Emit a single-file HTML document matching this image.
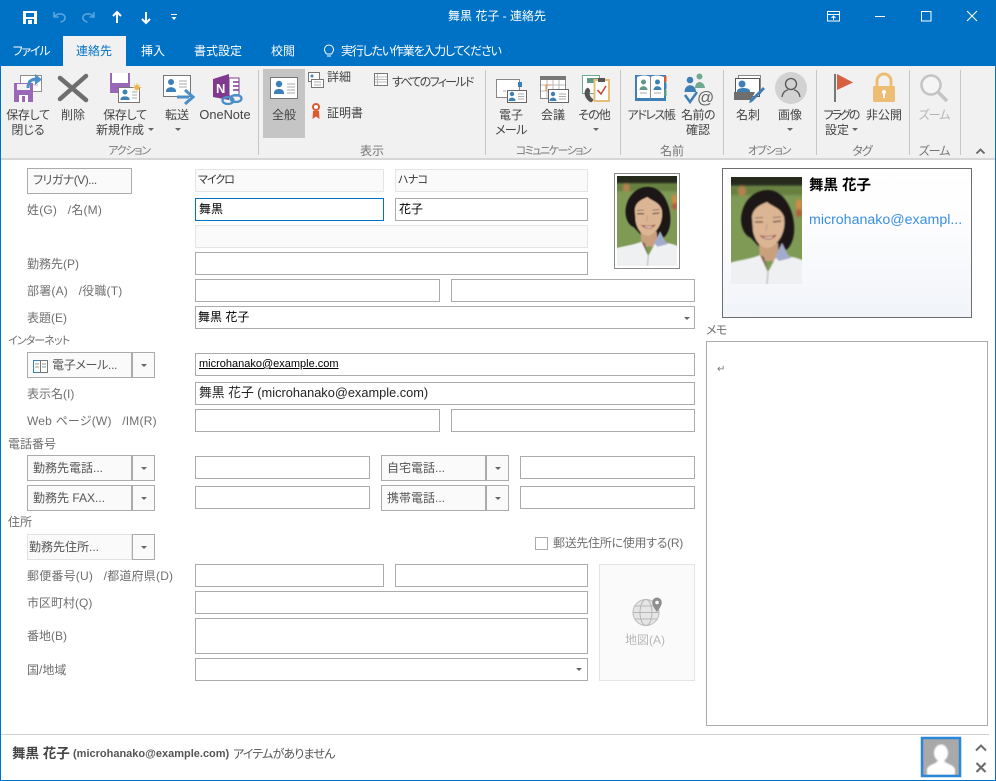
<!DOCTYPE html>
<html lang="ja"><head><meta charset="utf-8"><title>舞黒 花子 - 連絡先</title>
<style>
html,body{margin:0;padding:0;width:996px;height:781px;overflow:hidden;background:#fff}
body{position:relative;font-family:"Liberation Sans","Noto Sans CJK JP",sans-serif;font-size:12px;font-feature-settings:"palt";color:#444}
div,span.t{position:absolute;box-sizing:border-box}
.t{white-space:nowrap;line-height:16px;height:16px}
.c{transform:translateX(-50%)}
.w{color:#fff}
.r{color:#444}
.g{color:#777}
.l{color:#6f6f6f}
.k{color:#000}
.f{border:1px solid #ababab;background:#fff}
.d{border:1px solid #e4e4e4;background:#fafafa}
.b{border:1px solid #ababab;background:#fafafa;height:26px;width:105px;left:27px}
.ar{width:23px;height:26px;border:1px solid #ababab;background:#fafafa}
.a{width:0;height:0;border-left:3px solid transparent;border-right:3px solid transparent;border-top:3px solid #666}
.s{width:1px;background:#c6c6c6;top:70px;height:85px}
svg{position:absolute;left:0;top:0}
</style></head><body>
<div style="left:0;top:0;width:996px;height:781px;border:1px solid #0072c6;border-top:0"></div>
<div style="left:0;top:0;width:996px;height:66px;background:#0072c6"></div>
<div style="left:1px;top:66px;width:994px;height:92px;background:#f1f1f1"></div>
<div style="left:1px;top:158px;width:994px;height:2px;background:#d6d6d6"></div>
<div style="left:63px;top:36px;width:63px;height:30px;background:#f1f1f1"></div>
<div style="left:263px;top:69px;width:42px;height:69px;background:#c5c5c5"></div>

<span class="t w c" style="left:497px;top:8px">舞黒 花子 - 連絡先</span>
<span class="t w c" style="left:31px;top:43px;letter-spacing:-1.2px">ファイル</span>
<span class="t c" style="left:94px;top:43px;color:#0072c6">連絡先</span>
<span class="t w c" style="left:153px;top:43px">挿入</span>
<span class="t w c" style="left:218px;top:43px">書式設定</span>
<span class="t w c" style="left:283px;top:43px">校閲</span>
<span class="t w" style="left:341px;top:43px;letter-spacing:-1.2px">実行したい作業を入力してください</span>

<span class="t r c" style="left:28px;top:107px;letter-spacing:-.3px">保存して</span><span class="t r c" style="left:28px;top:122px">閉じる</span>
<span class="t r c" style="left:73px;top:107px">削除</span>
<span class="t r c" style="left:125px;top:107px;letter-spacing:-.3px">保存して</span><span class="t r c" style="left:120px;top:122px">新規作成</span><div class="a" style="left:148px;top:128px"></div>
<span class="t r c" style="left:177px;top:107px">転送</span><div class="a" style="left:175px;top:128px"></div>
<span class="t r c" style="left:225px;top:107px;font-size:12.8px">OneNote</span>
<span class="t r c" style="left:284px;top:107px">全般</span>
<span class="t r" style="left:327px;top:69px">詳細</span>
<span class="t r" style="left:392px;top:74px;letter-spacing:-1.7px">すべてのフィールド</span>
<span class="t r" style="left:327px;top:105px">証明書</span>
<span class="t r c" style="left:511px;top:107px">電子</span><span class="t r c" style="left:511px;top:122px;letter-spacing:-.6px">メール</span>
<span class="t r c" style="left:553px;top:107px">会議</span>
<span class="t r c" style="left:594px;top:107px;letter-spacing:-1px">その他</span><div class="a" style="left:593px;top:128px"></div>
<span class="t r c" style="left:651px;top:107px;letter-spacing:-1.4px">アドレス帳</span>
<span class="t r c" style="left:698px;top:107px;letter-spacing:-.5px">名前の</span><span class="t r c" style="left:698px;top:122px">確認</span>
<span class="t r c" style="left:748px;top:107px">名刺</span>
<span class="t r c" style="left:790px;top:107px">画像</span><div class="a" style="left:787px;top:128px"></div>
<span class="t r c" style="left:841px;top:107px;letter-spacing:-2px">フラグの</span><span class="t r c" style="left:837px;top:122px">設定</span><div class="a" style="left:852px;top:128px"></div>
<span class="t r c" style="left:884px;top:107px">非公開</span>
<span class="t c" style="left:934px;top:107px;color:#b5b5b5;letter-spacing:-1px">ズーム</span>
<span class="t g c" style="left:129px;top:143px;font-size:11px;letter-spacing:-1.2px">アクション</span>
<span class="t g c" style="left:372px;top:143px">表示</span>
<span class="t g c" style="left:553px;top:143px;font-size:11px;letter-spacing:-1.5px">コミュニケーション</span>
<span class="t g c" style="left:672px;top:143px">名前</span>
<span class="t g c" style="left:769px;top:143px;font-size:11px;letter-spacing:-1.2px">オプション</span>
<span class="t g c" style="left:862px;top:143px;letter-spacing:-1px">タグ</span>
<span class="t g c" style="left:934px;top:143px;letter-spacing:-1px">ズーム</span>
<div class="s" style="left:258px"></div><div class="s" style="left:485px"></div><div class="s" style="left:620px"></div><div class="s" style="left:723px"></div><div class="s" style="left:816px"></div><div class="s" style="left:909px"></div><div class="s" style="left:960px"></div>

<!-- form -->
<div class="b" style="top:168px"></div><span class="t" style="left:33px;top:172px;color:#555;letter-spacing:-.5px">フリガナ(V)...</span>
<div class="d" style="left:195px;top:169px;width:189px;height:23px"></div><span class="t" style="left:198px;top:172px;color:#333;font-size:11px;letter-spacing:-1px">マイクロ</span>
<div class="d" style="left:395px;top:169px;width:193px;height:23px"></div><span class="t" style="left:398px;top:172px;color:#333;font-size:11px;letter-spacing:-.7px">ハナコ</span>
<span class="t l" style="left:27px;top:202px;letter-spacing:.2px">姓(G) &nbsp;&nbsp;/名(M)</span>
<div class="f" style="left:195px;top:198px;width:189px;height:23px;border-color:#0072c6"></div><span class="t k" style="left:199px;top:201px">舞黒</span>
<div class="f" style="left:395px;top:198px;width:193px;height:23px"></div><span class="t k" style="left:399px;top:201px">花子</span>
<div class="d" style="left:195px;top:225px;width:393px;height:23px"></div>
<span class="t l" style="left:27px;top:256px">勤務先(P)</span>
<div class="f" style="left:195px;top:252px;width:393px;height:23px"></div>
<span class="t l" style="left:27px;top:283px;letter-spacing:.2px">部署(A) &nbsp;&nbsp;/役職(T)</span>
<div class="f" style="left:195px;top:279px;width:245px;height:23px"></div>
<div class="f" style="left:451px;top:279px;width:244px;height:23px"></div>
<span class="t l" style="left:27px;top:310px">表題(E)</span>
<div class="f" style="left:195px;top:306px;width:500px;height:23px"></div><span class="t k" style="left:198px;top:309px">舞黒 花子</span><div class="a" style="left:684px;top:317px"></div>
<span class="t l" style="left:8px;top:333px;font-size:11px;letter-spacing:-.9px">インターネット</span>
<div class="b" style="top:352px"></div><div class="ar" style="left:132px;top:352px"></div><div class="a" style="left:141px;top:364px"></div>
<span class="t" style="left:52px;top:357px;color:#555;letter-spacing:-.3px">電子メール...</span>
<div class="f" style="left:195px;top:353px;width:500px;height:23px"></div><span class="t k" style="left:199px;top:356px;font-size:11px;text-decoration:underline">microhanako@example.com</span>
<span class="t l" style="left:27px;top:386px">表示名(I)</span>
<div class="f" style="left:195px;top:382px;width:500px;height:23px"></div><span class="t" style="left:199px;top:385px;color:#222;font-size:12.8px">舞黒 花子 (microhanako@example.com)</span>
<span class="t l" style="left:27px;top:413px;letter-spacing:.2px">Web ページ(W) &nbsp;&nbsp;/IM(R)</span>
<div class="f" style="left:195px;top:409px;width:245px;height:23px"></div>
<div class="f" style="left:451px;top:409px;width:244px;height:23px"></div>
<span class="t l" style="left:8px;top:436px">電話番号</span>
<div class="b" style="top:455px"></div><div class="ar" style="left:132px;top:455px"></div><div class="a" style="left:141px;top:467px"></div><span class="t" style="left:33px;top:460px;color:#555">勤務先電話...</span>
<div class="f" style="left:195px;top:456px;width:175px;height:23px"></div>
<div class="b" style="left:381px;top:455px"></div><div class="ar" style="left:486px;top:455px"></div><div class="a" style="left:495px;top:467px"></div><span class="t" style="left:387px;top:460px;color:#555">自宅電話...</span>
<div class="f" style="left:520px;top:456px;width:175px;height:23px"></div>
<div class="b" style="top:485px"></div><div class="ar" style="left:132px;top:485px"></div><div class="a" style="left:141px;top:497px"></div><span class="t" style="left:33px;top:490px;color:#555">勤務先 FAX...</span>
<div class="f" style="left:195px;top:486px;width:175px;height:23px"></div>
<div class="b" style="left:381px;top:485px"></div><div class="ar" style="left:486px;top:485px"></div><div class="a" style="left:495px;top:497px"></div><span class="t" style="left:387px;top:490px;color:#555">携帯電話...</span>
<div class="f" style="left:520px;top:486px;width:175px;height:23px"></div>
<span class="t l" style="left:8px;top:514px">住所</span>
<div class="b" style="top:534px;border-color:#e2e2e2"></div><div class="ar" style="left:132px;top:534px"></div><div class="a" style="left:141px;top:546px"></div><span class="t" style="left:29px;top:539px;color:#555">勤務先住所...</span>
<div class="f" style="left:535px;top:537px;width:13px;height:13px"></div><span class="t l" style="left:553px;top:535px;letter-spacing:-.3px">郵送先住所に使用する(R)</span>
<span class="t l" style="left:27px;top:568px;letter-spacing:.2px">郵便番号(U) &nbsp;&nbsp;/都道府県(D)</span>
<div class="f" style="left:195px;top:564px;width:189px;height:23px"></div>
<div class="f" style="left:395px;top:564px;width:193px;height:23px"></div>
<span class="t l" style="left:27px;top:595px">市区町村(Q)</span>
<div class="f" style="left:195px;top:591px;width:393px;height:23px"></div>
<span class="t l" style="left:27px;top:628px">番地(B)</span>
<div class="f" style="left:195px;top:618px;width:393px;height:36px"></div>
<span class="t l" style="left:27px;top:662px">国/地域</span>
<div class="f" style="left:195px;top:658px;width:393px;height:23px"></div><div class="a" style="left:576px;top:668px"></div>
<div class="d" style="left:599px;top:564px;width:96px;height:117px"></div>
<span class="t c" style="left:645px;top:632px;color:#b8b8b8">地図(A)</span>

<!-- contact card -->
<div style="left:614px;top:173px;width:66px;height:96px;border:1px solid #8a8a8a;background:#fff"></div>
<div style="left:722px;top:168px;width:250px;height:150px;border:1px solid #6d6d6d;background:linear-gradient(#fff 0%,#fdfdfe 35%,#f1f4f9 100%)"></div>
<span class="t k" style="left:809px;top:177px;font-size:14.5px;font-weight:bold;height:18px;line-height:18px">舞黒 花子</span>
<span class="t" style="left:809px;top:212px;font-size:14.2px;color:#3a8fe4">microhanako@exampl...</span>
<span class="t l" style="left:706px;top:322px;letter-spacing:-.5px">メモ</span>
<div class="f" style="left:706px;top:341px;width:282px;height:385px"></div>
<span class="t" style="left:717px;top:362px;color:#777;font-size:10px">↵</span>

<!-- footer -->
<div style="left:1px;top:734px;width:988px;height:1px;background:#d2d2d2"></div>
<span class="t" style="left:12px;top:746px;font-weight:bold;font-size:13.5px;color:#444">舞黒 花子</span>
<span class="t" style="left:73px;top:746px;font-weight:bold;font-size:11px;color:#555">(microhanako@example.com)</span>
<span class="t" style="left:233px;top:746px;color:#555;letter-spacing:-.8px">アイテムがありません</span>

<svg width="996" height="781" viewBox="0 0 996 781" xmlns="http://www.w3.org/2000/svg">
<defs>
<filter id="bl" x="-5%" y="-5%" width="110%" height="110%"><feGaussianBlur stdDeviation="0.7"/></filter>
<filter id="bl2" x="-20%" y="-20%" width="140%" height="140%"><feGaussianBlur stdDeviation="1.3"/></filter>
<clipPath id="pc"><rect width="71" height="107"/></clipPath>
<symbol id="photo" viewBox="0 0 71 107" preserveAspectRatio="none">
<g clip-path="url(#pc)">
<rect width="71" height="107" fill="#7f9a55"/>
<g filter="url(#bl2)"><rect x="-5" y="-5" width="81" height="14" fill="#262a1c"/><rect x="-5" y="10" width="81" height="8" fill="#66803f"/>
<ellipse cx="11" cy="14" rx="4" ry="5" fill="#b5814f"/><ellipse cx="68" cy="28" rx="3" ry="6" fill="#d98845"/><ellipse cx="68" cy="36" rx="3" ry="4" fill="#b85a3c"/></g>
<g filter="url(#bl)">
<path d="M37 13C22 13 11 25 10 42C10 50 13 58 20 61L30 72L52 74C57 74 62 66 63 56C65 36 54 13 37 13Z" fill="#1b1613"/>
<path d="M28 66L29 84L48 84L47 66Z" fill="#c9a07e"/>
<path d="M-2 86C8 83 20 82 29 78L37 95L45 80C54 78 66 80 73 84L73 109L-2 109Z" fill="#eef0f2"/>
<path d="M44 80L51 66L56 76L60 81L48 84Z" fill="#a3abcc"/>
<path d="M37 95L36 107" stroke="#aaa4aa" stroke-width="1"/>
<path d="M29 78L37 95L33 80Z" fill="#7e6048"/>
<path d="M21 40C22 31 29 28 36 25C42 30 50 31 53 40C55 52 50 66 38 71C30 72 24 64 22 54Z" fill="#dcb594"/>
<path d="M24 45L32 45M42 45L50 44" stroke="#5a4334" stroke-width="1.3"/>
<path d="M24 41L32 40.500M42 40.500L50 40" stroke="#6a5040" stroke-width=".8"/>
<path d="M30 59C34 63 41 63 45 58C41 60 34 60 30 59Z" fill="#fff" stroke="#a35a4a" stroke-width="1.200"/>
<path d="M36 47L35 54" stroke="#c49a7c" stroke-width="1"/>
</g></g>
</symbol>
</defs>
<use href="#photo" x="617" y="176" width="60" height="90"/>
<use href="#photo" x="731" y="177" width="71" height="107"/>

<!-- QAT -->
<path d="M23 11H37V24H23Z" fill="#fff"/><rect x="26" y="13" width="8" height="4" fill="#0072c6"/><rect x="26" y="19" width="8" height="5" fill="#0072c6"/><rect x="28" y="20" width="4" height="4" fill="#fff"/>
<g fill="none" stroke="#fff" stroke-width="1.600">
<g opacity=".35"><path d="M54 12V17H58.500M54.500 16.500C57 13 64 13 65 17C65.500 19.500 63.500 21.500 60.500 22"/><path d="M94 12V17H89.500M93.500 16.500C91 13 84 13 83 17C82.500 19.500 84.500 21.500 87.500 22"/></g>
<path d="M117 23V12M113 16L117 12L121 16" stroke-width="2"/>
<path d="M146 12V23M142 19L146 23L150 19" stroke-width="2"/>
<path d="M171 14.500H177" stroke-width="1"/>
</g>
<path d="M171.500 17H176.500L174 20Z" fill="#fff"/>
<!-- window controls -->
<g fill="none" stroke="#fff" stroke-width="1">
<rect x="827.500" y="11.500" width="12" height="9.500"/><path d="M827 14.500H840M833.500 20V16M831.500 18L833.500 16L835.500 18"/>
<path d="M875 16.500H885"/>
<rect x="921.500" y="11.500" width="9.500" height="9.500"/>
<path d="M967 11L977 21M977 11L967 21"/>
</g>
<!-- bulb -->
<g fill="none" stroke="#fff" stroke-width="1"><path d="M326.500 54C325 52 324.500 51 324.500 49.500A4.500 4.500 0 0 1 333.500 49.500C333.500 51 333 52 331.500 54Z"/><path d="M327 56H331"/></g>
<!-- save&close -->
<rect x="20.500" y="75.500" width="21" height="16" fill="#fff" stroke="#8e8e8e"/><path d="M24 85H38M28 81H38" stroke="#bbb"/>
<path d="M14 83H33V102H14Z" fill="#9a68b8"/><rect x="17" y="84" width="13" height="6" fill="#f1f1f1"/><rect x="19" y="95" width="9" height="7" fill="#fff"/><rect x="22" y="96" width="3" height="6" fill="#9a68b8"/>
<path d="M28 88C28 81 32 79 37 79" fill="none" stroke="#4a8fc7" stroke-width="3"/><path d="M35 74L42 79.500L35 85Z" fill="#4a8fc7"/>
<!-- delete -->
<path d="M60 78L86 100M86 76L60 99" stroke="#6e6e6e" stroke-width="4.500" stroke-linecap="round"/>
<!-- save new -->
<path d="M110 73H130V93H110Z" fill="#9a68b8"/><rect x="112" y="73" width="16" height="10" fill="#fff"/>
<rect x="118.500" y="87.500" width="21" height="15" fill="#fff" stroke="#777"/><circle cx="125" cy="92" r="2.500" fill="#3f7fb8"/><path d="M120.500 99C120.500 95.500 129.500 95.500 129.500 99V100H120.500Z" fill="#3f7fb8"/><path d="M132 92H137M132 95H137M132 98H137" stroke="#aaa"/>
<circle cx="137" cy="87.500" r="2.500" fill="#eab54f"/><path d="M137 83V92M132.500 87.500H141.500M134 84.500L140 90.500M140 84.500L134 90.500" stroke="#eab54f" stroke-width=".7"/>
<!-- forward -->
<rect x="163.500" y="75.500" width="27" height="21" fill="#fff" stroke="#777"/><circle cx="171" cy="82" r="3" fill="#3f7fb8"/><path d="M166 91C166 86 176 86 176 91V92H166Z" fill="#3f7fb8"/><path d="M179 81H187M179 84H187M179 87H187" stroke="#aaa"/>
<path d="M177 97H189" stroke="#4a8fc7" stroke-width="3"/><path d="M185 90L193 97L185 104" fill="none" stroke="#4a8fc7" stroke-width="3"/>
<!-- onenote -->
<path d="M213 79L229 74V100L213 97Z" fill="#7f3a8e"/>
<rect x="229" y="78" width="10" height="18" fill="#fff" stroke="#7f3a8e"/><path d="M233 82H239M233 86H239M233 90H239" stroke="#7f3a8e" stroke-width="1.500"/>
<text x="216" y="93" font-family="Liberation Sans" font-size="13" font-weight="bold" fill="#fff" style="font-feature-settings:normal">N</text>
<g fill="none" stroke="#4a8fc7" stroke-width="2.300"><ellipse cx="228" cy="100.500" rx="5.500" ry="3.500"/><ellipse cx="236" cy="98.500" rx="5.500" ry="3.500"/></g>
<!-- general card -->
<rect x="270.500" y="77.500" width="27" height="21" fill="#fff" stroke="#777"/><circle cx="279" cy="84" r="3.200" fill="#3f7fb8"/><path d="M274 93C274 87.500 284 87.500 284 93V94H274Z" fill="#3f7fb8"/><path d="M287 84H295M287 87H295M287 90H295M287 93H295" stroke="#aaa"/>
<!-- details small -->
<rect x="308.500" y="72.500" width="11" height="9" fill="#fff" stroke="#777"/><circle cx="312" cy="76" r="1.500" fill="#3f7fb8"/><rect x="311.500" y="79.500" width="12" height="8" fill="#fff" stroke="#777"/><path d="M314 82H321M314 85H321" stroke="#aaa"/>
<!-- all fields -->
<rect x="374.500" y="73.500" width="13" height="12" fill="#fff" stroke="#777"/><path d="M377.500 74V85M375 77H387M375 79.500H387M375 82H387" stroke="#bbb"/>
<!-- cert -->
<circle cx="316" cy="107" r="3" fill="#fff" stroke="#dd5a30" stroke-width="2"/><path d="M313 111L312.500 119L316 116.500L319.500 119L319 111Z" fill="#dd5a30"/>
<!-- email -->
<rect x="496.500" y="79.500" width="23" height="18" fill="#fff" stroke="#888"/><rect x="518" y="82" width="4" height="5" fill="#3f7fb8"/><path d="M503 91H506" stroke="#aaa"/>
<rect x="507.500" y="90.500" width="19" height="12" fill="#fff" stroke="#666"/><circle cx="512" cy="94" r="2.200" fill="#3f7fb8"/><path d="M508.500 101C508.500 96.500 515.500 96.500 515.500 101Z" fill="#3f7fb8"/><path d="M518 94H524M518 96.500H524M518 99H524" stroke="#aaa"/>
<!-- meeting -->
<rect x="540.500" y="76.500" width="25" height="22" fill="#fff" stroke="#888"/><rect x="540" y="76" width="26" height="4" fill="#777"/><path d="M547 80V98M553 80V90M559 80V90M541 85H565M541 91H548" stroke="#bbb"/><path d="M546 91V85H551" fill="none" stroke="#e28a3a"/>
<rect x="548.500" y="89.500" width="20" height="13" fill="#fff" stroke="#666"/><circle cx="553" cy="94" r="2.200" fill="#3f7fb8"/><path d="M549.500 101C549.500 96.500 556.500 96.500 556.500 101Z" fill="#3f7fb8"/><path d="M559 94H566M559 96.500H566M559 99H566" stroke="#aaa"/>
<!-- more -->
<rect x="582.500" y="75.500" width="17" height="18" fill="#fff" stroke="#6fa98f"/><rect x="587" y="78" width="11" height="5" fill="#5f9a84"/>
<path d="M587 88C583 91 584 98 590 102C592 103 594 100 593 99C590 97 589 94 590 92C591 90 588 87 587 88Z" fill="#555"/>
<rect x="594.500" y="80" width="14.500" height="21" fill="#fff" stroke="#e9bc78" stroke-width="2"/><rect x="598" y="78" width="7" height="4" fill="#555"/><path d="M597.500 90L601 94L606 86" fill="none" stroke="#c8412f" stroke-width="1.500"/>
<!-- address book -->
<rect x="635" y="75" width="31" height="26" fill="#3f7fb8"/><path d="M637 77C642 75 647 75 650.500 77C654 75 659 75 664 77V98H637Z" fill="#fff"/><path d="M650.500 77V99" stroke="#888"/>
<circle cx="643.500" cy="82" r="2.500" fill="#5f9a84"/><path d="M639.500 90C639.500 85 647.500 85 647.500 90Z" fill="#5f9a84"/><circle cx="657.500" cy="82" r="2.500" fill="#3f7fb8"/><path d="M653.500 90C653.500 85 661.500 85 661.500 90Z" fill="#3f7fb8"/>
<path d="M640 93H647M654 93H661" stroke="#aaa"/><rect x="664" y="76" width="2.500" height="6" fill="#d65a3a"/><rect x="664" y="83" width="2.500" height="6" fill="#3f7fb8"/><rect x="664" y="90" width="2.500" height="6" fill="#5f9a84"/>
<!-- check names -->
<circle cx="699.500" cy="76.500" r="3" fill="#6fa98f"/><path d="M695 88C695 80 704 80 705 88Z" fill="#6fa98f"/><circle cx="690" cy="80" r="3.300" fill="#3f7fb8"/><path d="M684.500 92C684.500 83 696 83 696 92Z" fill="#3f7fb8"/>
<path d="M685 95L690 102L697 92" fill="none" stroke="#3f7fb8" stroke-width="2.500"/>
<text x="697" y="103" font-family="Liberation Sans" font-size="17" fill="#666">@</text>
<!-- biz card -->
<rect x="738.500" y="75.500" width="22" height="18" fill="#fff" stroke="#888"/><rect x="735.500" y="78.500" width="24" height="18" fill="#fff" stroke="#555"/><circle cx="742" cy="84" r="3.500" fill="#3f7fb8"/><path d="M737 91C737 87 750 87 750 91V92H737Z" fill="#3f7fb8"/>
<path d="M734 92H755L751 100H734Z" fill="#6e6e6e"/>
<path d="M750 100L763 87L765 89L752 102L749 103Z" fill="#3f7fb8"/>
<!-- image -->
<circle cx="791" cy="88" r="16" fill="#d2d2d2"/><g fill="none" stroke="#555" stroke-width="1.300"><circle cx="791" cy="84" r="5.500"/><path d="M782 97C783 91 787 90 788 90M800 97C799 91 795 90 794 90"/></g>
<!-- flag -->
<path d="M835 74V102" stroke="#777" stroke-width="2"/><path d="M837 74L853 82.500L837 90Z" fill="#d95f43"/>
<!-- lock -->
<path d="M877 86V81A7 7 0 0 1 891 81V86" fill="none" stroke="#ecbd72" stroke-width="3"/><rect x="873" y="86" width="22" height="16" rx="1.500" fill="#ecbd72"/><circle cx="884" cy="92" r="2" fill="#fff"/><rect x="883" y="92" width="2" height="6" fill="#fff"/>
<!-- zoom -->
<circle cx="931" cy="85" r="9.500" fill="#f5f5f5" stroke="#c4c4c4" stroke-width="2.500"/><path d="M938 92L947 101" stroke="#c4c4c4" stroke-width="3.500"/>
<!-- collapse -->
<path d="M976.500 153.500L980.500 149.500L984.500 153.500" fill="none" stroke="#666" stroke-width="1.800"/>
<!-- email btn book -->
<rect x="33.500" y="360.500" width="7" height="12" fill="#fff" stroke="#3f7fb8"/><rect x="40.500" y="360.500" width="7" height="12" fill="#fff" stroke="#777"/><path d="M35 364H39M35 367H39M42 364H46M42 367H46" stroke="#999"/>
<!-- globe -->
<g fill="none" stroke="#b5b5b5"><circle cx="646" cy="612.500" r="13" fill="#e6e6e6" stroke="#bbb"/><ellipse cx="646" cy="612.500" rx="6" ry="13"/><path d="M633 612.500H659M635 606H657M635 619H657"/></g>
<path d="M657 597.500A4.800 4.800 0 0 1 661.800 602.500C661.800 606 657 612 657 612C657 612 652.200 606 652.200 602.500A4.800 4.800 0 0 1 657 597.500Z" fill="#8f8f8f"/><circle cx="657" cy="602.500" r="1.800" fill="#fafafa"/>
<!-- footer avatar -->
<rect x="922" y="738" width="38" height="38" fill="#a9a9a9"/>
<g filter="url(#bl)"><ellipse cx="941" cy="753" rx="7" ry="8.500" fill="#fff"/><path d="M927 775V769C929 764 937 764 938 760H944C945 764 953 764 955 769V775Z" fill="#fff"/></g>
<rect x="922" y="738" width="38" height="38" fill="none" stroke="#2b88d8" stroke-width="2.500"/>
<path d="M976 750.500L981 745.500L986 750.500" fill="none" stroke="#6d6d6d" stroke-width="2"/>
<path d="M976.500 763L985.500 772M985.500 763L976.500 772" stroke="#6d6d6d" stroke-width="2.200"/>
</svg>
</body></html>
